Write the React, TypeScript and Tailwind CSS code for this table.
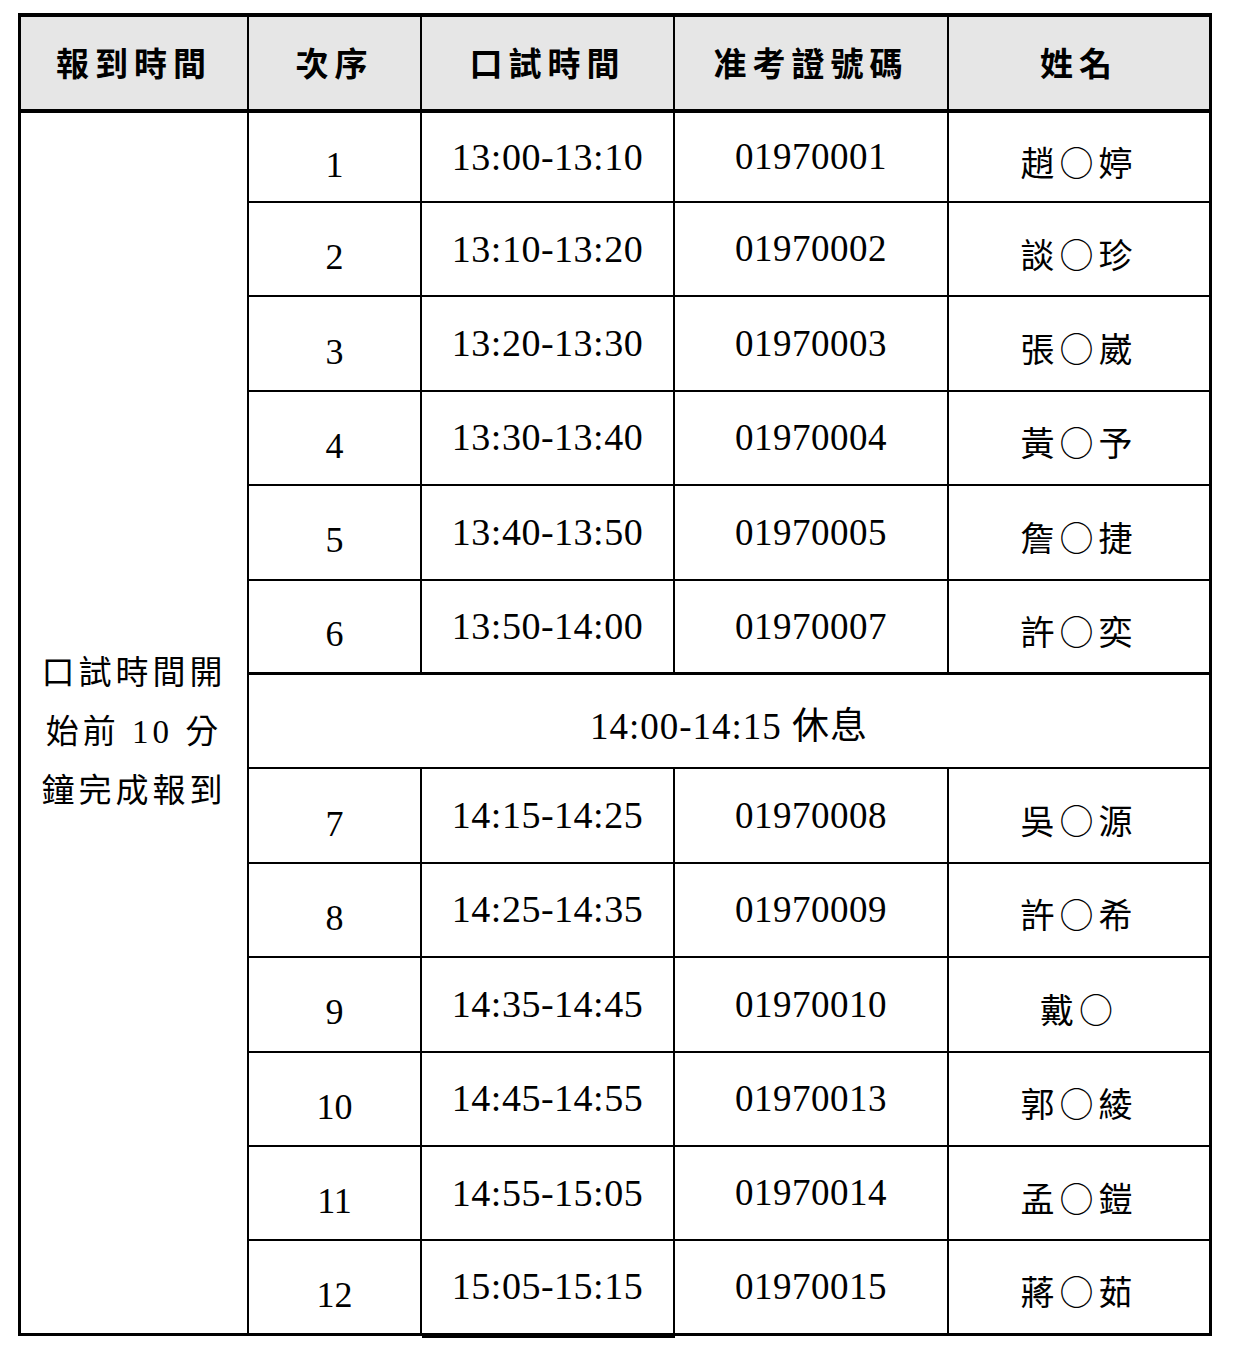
const rows = [
  ['1', '13:00-13:10', '01970001', '趙○婷'],
  ['2', '13:10-13:20', '01970002', '談○珍'],
  ['3', '13:20-13:30', '01970003', '張○崴'],
  ['4', '13:30-13:40', '01970004', '黃○予'],
  ['5', '13:40-13:50', '01970005', '詹○捷'],
  ['6', '13:50-14:00', '01970007', '許○奕'],
]

const rows2 = [
  ['7', '14:15-14:25', '01970008', '吳○源'],
  ['8', '14:25-14:35', '01970009', '許○希'],
  ['9', '14:35-14:45', '01970010', '戴○'],
  ['10', '14:45-14:55', '01970013', '郭○綾'],
  ['11', '14:55-15:05', '01970014', '孟○鎧'],
  ['12', '15:05-15:15', '01970015', '蔣○茹'],
]

function Row({ r, last, thick }: { r: string[]; last?: boolean; thick?: boolean }) {
  const b = last || thick ? 'border-b-[3px]' : 'border-b-2'
  return (
    <>
      <div className={`flex items-center justify-center border-r-2 border-black pt-4 font-['Liberation_Serif',serif] text-[36px] ${b}`}>
        {r[0]}
      </div>
      <div
        className={`flex items-center justify-center border-r-2 border-black font-['Liberation_Serif',serif] text-[38px] tracking-[0.5px] ${last ? '-mb-[2px] border-b-[5px]' : b}`}
      >
        {r[1]}
      </div>
      <div className={`flex items-center justify-center border-r-2 border-black font-['Liberation_Serif',serif] text-[37px] tracking-[0.5px] ${b}`}>
        {r[2]}
      </div>
      <div className={`flex items-center justify-center border-r-[3px] border-black pt-2 font-['Noto_Sans_CJK_TC',sans-serif] text-[34px] tracking-[5px] ${b}`}>
        {r[3]}
      </div>
    </>
  )
}

export default function App() {
  return (
    <div className="min-h-[1346px] bg-white pt-[13px] pl-[18px]">
      <div className="grid w-[1194px] grid-cols-[228px_173px_253px_274px_263px] grid-rows-[96px_90px_repeat(12,94.4px)] border-t-4 border-l-[3px] border-black text-black">
        {['報到時間', '次序', '口試時間', '准考證號碼', '姓名'].map((h, i) => (
          <div
            key={h}
            className={`flex items-center justify-center border-b-4 border-black bg-[#e6e6e6] font-['Noto_Sans_CJK_TC',sans-serif] text-[33px] font-bold tracking-[6px] ${i === 4 ? 'border-r-[3px]' : 'border-r-2'}`}
          >
            {h}
          </div>
        ))}

        <div className="row-span-13 flex flex-col items-center justify-center border-r-2 border-b-[3px] border-black pt-5 font-['Liberation_Serif','Noto_Sans_CJK_TC',serif] text-[33px] leading-[59px] tracking-[4px]">
          <span>口試時間開</span>
          <span>始前 10 分</span>
          <span>鐘完成報到</span>
        </div>

        {rows.map((r, i) => (
          <Row key={r[0]} r={r} thick={i === 5} />
        ))}

        <div className="col-span-4 flex items-center justify-center border-r-[3px] border-b-2 border-black pt-3 font-['Liberation_Serif','Noto_Sans_CJK_TC',serif] text-[37px] tracking-[1px]">
          14:00-14:15 休息
        </div>

        {rows2.map((r, i) => (
          <Row key={r[0]} r={r} last={i === 5} />
        ))}
      </div>
    </div>
  )
}
